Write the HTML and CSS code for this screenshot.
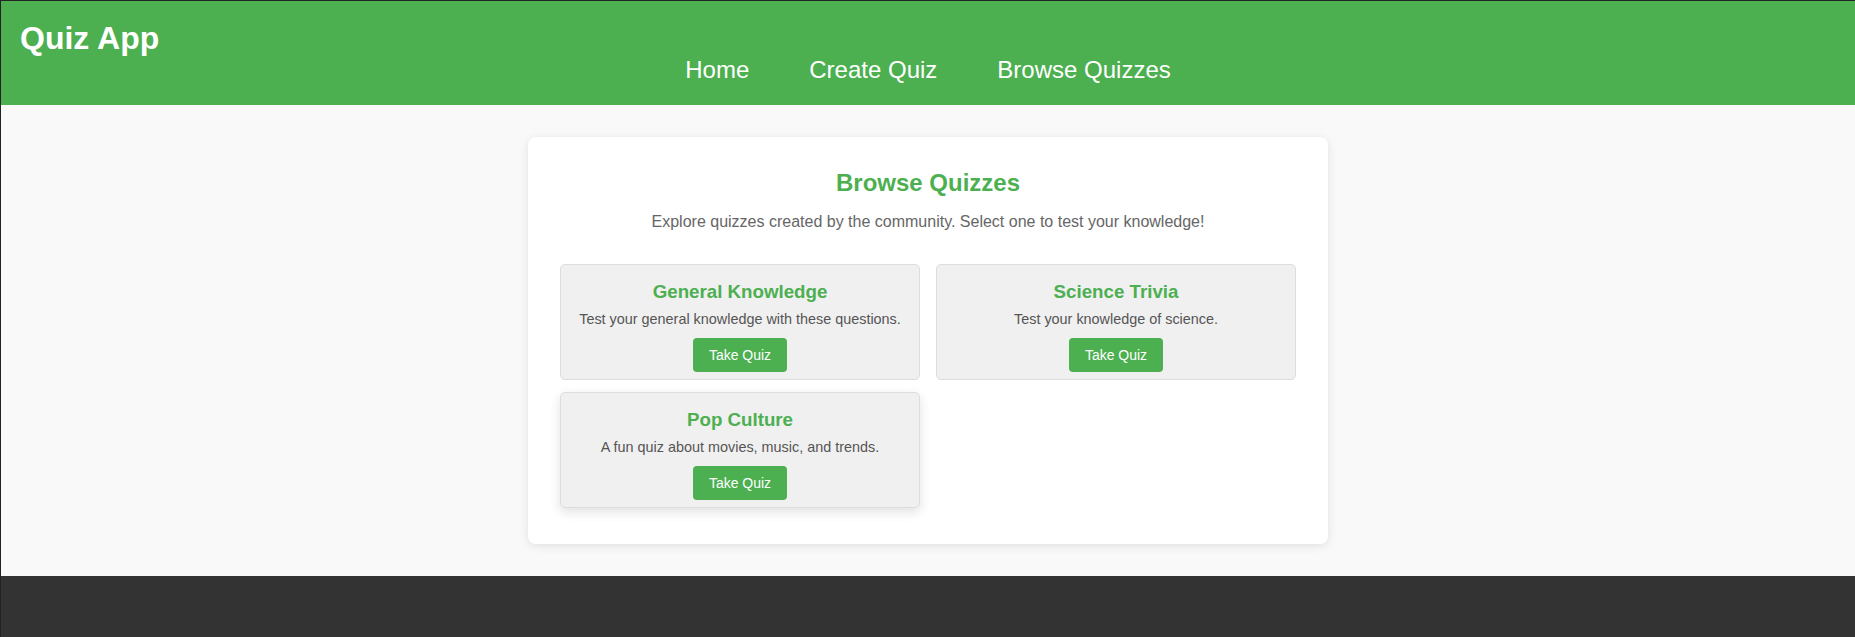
FILE: index.html
```html
<!DOCTYPE html>
<html lang="en">
<head>
<meta charset="utf-8">
<title>Quiz App - Browse Quizzes</title>
<link rel="stylesheet" href="styles.css">
</head>
<body>
<div class="page">
  <header class="site-header">
    <h1 class="brand">Quiz App</h1>
    <nav class="nav">
      <a class="nav-link" href="#">Home</a>
      <a class="nav-link" href="#">Create Quiz</a>
      <a class="nav-link" href="#">Browse Quizzes</a>
    </nav>
  </header>
  <main class="main">
    <section class="panel">
      <h2 class="panel-title">Browse Quizzes</h2>
      <p class="panel-intro">Explore quizzes created by the community. Select one to test your knowledge!</p>
      <div class="quiz-grid">
        <div class="quiz-card">
          <h3 class="quiz-title">General Knowledge</h3>
          <p class="quiz-desc">Test your general knowledge with these questions.</p>
          <button class="quiz-btn">Take Quiz</button>
        </div>
        <div class="quiz-card">
          <h3 class="quiz-title">Science Trivia</h3>
          <p class="quiz-desc">Test your knowledge of science.</p>
          <button class="quiz-btn">Take Quiz</button>
        </div>
        <div class="quiz-card is-hover">
          <h3 class="quiz-title">Pop Culture</h3>
          <p class="quiz-desc">A fun quiz about movies, music, and trends.</p>
          <button class="quiz-btn">Take Quiz</button>
        </div>
      </div>
    </section>
  </main>
  <footer class="site-footer"></footer>
</div>
</body>
</html>
```
FILE: styles.css
```css
* {
  box-sizing: border-box;
}

html, body {
  margin: 0;
  padding: 0;
}

body {
  font-family: "Liberation Sans", Arial, sans-serif;
  background: #f9f9f9;
  color: #333;
}

.page {
  border-top: 1px solid #222;
  border-left: 1px solid #222;
  min-height: 100vh;
  display: flex;
  flex-direction: column;
}

.site-header {
  background: #4caf50;
  color: #fff;
  padding: 20px 19px 21.6px;
}

.brand {
  margin: 0;
  font-size: 32px;
  font-weight: bold;
  line-height: 34.8px;
}

.nav {
  display: flex;
  justify-content: center;
  gap: 60px;
  line-height: normal;
}

.nav-link {
  color: #fff;
  text-decoration: none;
  font-size: 24px;
}

.main {
  padding: 32px 0;
  display: flex;
  justify-content: center;
}

.panel {
  width: 800px;
  background: #fff;
  border-radius: 8px;
  box-shadow: 0 2px 10px rgba(0, 0, 0, 0.1);
  padding: 32px;
  text-align: center;
}

.panel-title {
  margin: 0 0 16px;
  font-size: 24px;
  font-weight: bold;
  color: #4caf50;
  line-height: normal;
}

.panel-intro {
  margin: 0 0 33px;
  font-size: 16px;
  color: #666;
  line-height: normal;
}

.quiz-grid {
  display: grid;
  grid-template-columns: 1fr 1fr;
  gap: 16px;
}

.quiz-card {
  background: #f0f0f0;
  border: 1px solid #ddd;
  border-radius: 5px;
  padding: 16px 16px 7px;
  text-align: center;
}

.quiz-card.is-hover {
  transform: translateY(-4px);
  box-shadow: 0 4px 12px rgba(0, 0, 0, 0.12);
}

.quiz-title {
  margin: 0 0 8px;
  font-size: 18.72px;
  font-weight: bold;
  color: #4caf50;
  line-height: normal;
}

.quiz-desc {
  margin: 0 0 11px;
  font-size: 14.4px;
  color: #555;
  line-height: normal;
}

.quiz-btn {
  display: inline-block;
  font-family: "Liberation Sans", Arial, sans-serif;
  font-size: 14px;
  line-height: normal;
  color: #fff;
  background: #4caf50;
  border: none;
  border-radius: 4px;
  padding: 9px 16px;
  cursor: pointer;
}

.site-footer {
  background: #333;
  flex: 1;
  min-height: 80px;
}
```
